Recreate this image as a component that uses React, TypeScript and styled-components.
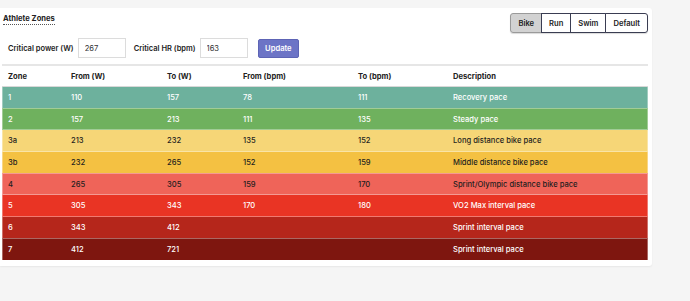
import styled, { createGlobalStyle } from 'styled-components';

const GlobalStyle = createGlobalStyle`
  html, body {
    margin: 0;
    padding: 0;
    background: #f5f5f5;
    font-family: Inter, "Noto Sans", sans-serif;
  }
`;

const Page = styled.div`
  padding-top: 8px;
  width: 690px;
  height: 301px;
  box-sizing: border-box;
`;

const Card = styled.div`
  width: 652px;
  background: #fff;
  border-radius: 0 3px 3px 0;
  box-shadow: 0 1px 2px rgba(0, 0, 0, 0.06);
  padding: 5px 4px 5px 2px;
  box-sizing: border-box;
`;

const TopBar = styled.div`
  display: flex;
  justify-content: space-between;
  align-items: flex-start;
  height: 25px;
`;

const Title = styled.span`
  font-size: 7.6px;
  font-weight: 700;
  color: #222;
  margin: 1px 0 0 1px;
  padding-bottom: 1px;
  border-bottom: 1px dotted #555;
`;

const ButtonGroup = styled.div`
  display: flex;
  border-radius: 3px;
  box-shadow: 0 1px 1px rgba(0, 0, 0, 0.15);
`;

const SportButton = styled.button<{ $active?: boolean }>`
  height: 20px;
  padding: 0 7px;
  font-family: inherit;
  font-size: 7.6px;
  font-weight: 600;
  color: #222;
  background: ${({ $active }) => ($active ? '#d2d2d2' : '#fff')};
  border: 1px solid ${({ $active }) => ($active ? '#9a9a9a' : '#3a3d52')};
  margin-left: -1px;
  &:first-child {
    border-radius: 3px 0 0 3px;
    margin-left: 0;
  }
  &:last-child {
    border-radius: 0 3px 3px 0;
  }
`;

const Controls = styled.div`
  display: flex;
  align-items: center;
  height: 20px;
  padding-left: 6px;
  margin-bottom: 6px;
`;

const Label = styled.label`
  font-size: 7.5px;
  font-weight: 600;
  color: #222;
  margin-right: 4px;
`;

const NumberInput = styled.input`
  width: 48px;
  height: 20px;
  box-sizing: border-box;
  border: 1px solid #dcdcdc;
  font-family: inherit;
  font-size: 7.6px;
  color: #333;
  padding: 0 6px;
  margin-right: 8px;
`;

const UpdateButton = styled.button`
  height: 19px;
  padding: 0 6.5px;
  margin-left: 2px;
  background: #6c74c6;
  border: 1px solid #5d64b5;
  border-radius: 2px;
  color: #fff;
  font-family: inherit;
  font-size: 7.6px;
  font-weight: 600;
`;

const Table = styled.table`
  width: 646px;
  border-collapse: collapse;
  font-size: 7.6px;
  border-top: 2px solid #e6e6e6;
`;

const HeadCell = styled.th`
  text-align: left;
  font-weight: 700;
  color: #222;
  height: 20px;
  padding: 0 6px;
  border-bottom: 1px solid #d8d8d8;
`;

const Row = styled.tr<{ $bg: string; $fg: string }>`
  background: ${({ $bg }) => $bg};
  color: ${({ $fg }) => $fg};
  border-bottom: 1px solid rgba(255, 255, 255, 0.35);
  td:first-child {
    box-shadow: inset 1px 0 rgba(255, 255, 255, 0.35);
  }
  td:last-child {
    box-shadow: inset -1px 0 rgba(255, 255, 255, 0.35);
  }
`;

const Cell = styled.td`
  height: 20.7px;
  padding: 0 6px;
  font-weight: 500;
`;

const columns = [
  { title: 'Zone', width: 63 },
  { title: 'From (W)', width: 96 },
  { title: 'To (W)', width: 76 },
  { title: 'From (bpm)', width: 115 },
  { title: 'To (bpm)', width: 95 },
  { title: 'Description', width: 201 },
];

const zones = [
  { zone: '1', fw: '110', tw: '157', fb: '78', tb: '111', desc: 'Recovery pace', bg: '#6db19d', fg: '#fff' },
  { zone: '2', fw: '157', tw: '213', fb: '111', tb: '135', desc: 'Steady pace', bg: '#6fb15e', fg: '#fff' },
  { zone: '3a', fw: '213', tw: '232', fb: '135', tb: '152', desc: 'Long distance bike pace', bg: '#f6d677', fg: '#1e1e1e' },
  { zone: '3b', fw: '232', tw: '265', fb: '152', tb: '159', desc: 'Middle distance bike pace', bg: '#f4c142', fg: '#1e1e1e' },
  { zone: '4', fw: '265', tw: '305', fb: '159', tb: '170', desc: 'Sprint/Olympic distance bike pace', bg: '#ef6459', fg: '#1e1e1e' },
  { zone: '5', fw: '305', tw: '343', fb: '170', tb: '180', desc: 'VO2 Max interval pace', bg: '#e93424', fg: '#fff' },
  { zone: '6', fw: '343', tw: '412', fb: '', tb: '', desc: 'Sprint interval pace', bg: '#b5261b', fg: '#fff' },
  { zone: '7', fw: '412', tw: '721', fb: '', tb: '', desc: 'Sprint interval pace', bg: '#7e160f', fg: '#fff' },
];

export default function App() {
  return (
    <>
      <GlobalStyle />
      <Page>
        <Card>
          <TopBar>
            <Title>Athlete Zones</Title>
            <ButtonGroup>
              <SportButton $active>Bike</SportButton>
              <SportButton>Run</SportButton>
              <SportButton>Swim</SportButton>
              <SportButton>Default</SportButton>
            </ButtonGroup>
          </TopBar>
          <Controls>
            <Label>Critical power (W)</Label>
            <NumberInput defaultValue="267" />
            <Label>Critical HR (bpm)</Label>
            <NumberInput defaultValue="163" />
            <UpdateButton>Update</UpdateButton>
          </Controls>
          <Table>
            <colgroup>
              {columns.map((c) => (
                <col key={c.title} style={{ width: c.width }} />
              ))}
            </colgroup>
            <thead>
              <tr>
                {columns.map((c) => (
                  <HeadCell key={c.title}>{c.title}</HeadCell>
                ))}
              </tr>
            </thead>
            <tbody>
              {zones.map((z) => (
                <Row key={z.zone} $bg={z.bg} $fg={z.fg}>
                  <Cell>{z.zone}</Cell>
                  <Cell>{z.fw}</Cell>
                  <Cell>{z.tw}</Cell>
                  <Cell>{z.fb}</Cell>
                  <Cell>{z.tb}</Cell>
                  <Cell>{z.desc}</Cell>
                </Row>
              ))}
            </tbody>
          </Table>
        </Card>
      </Page>
    </>
  );
}
